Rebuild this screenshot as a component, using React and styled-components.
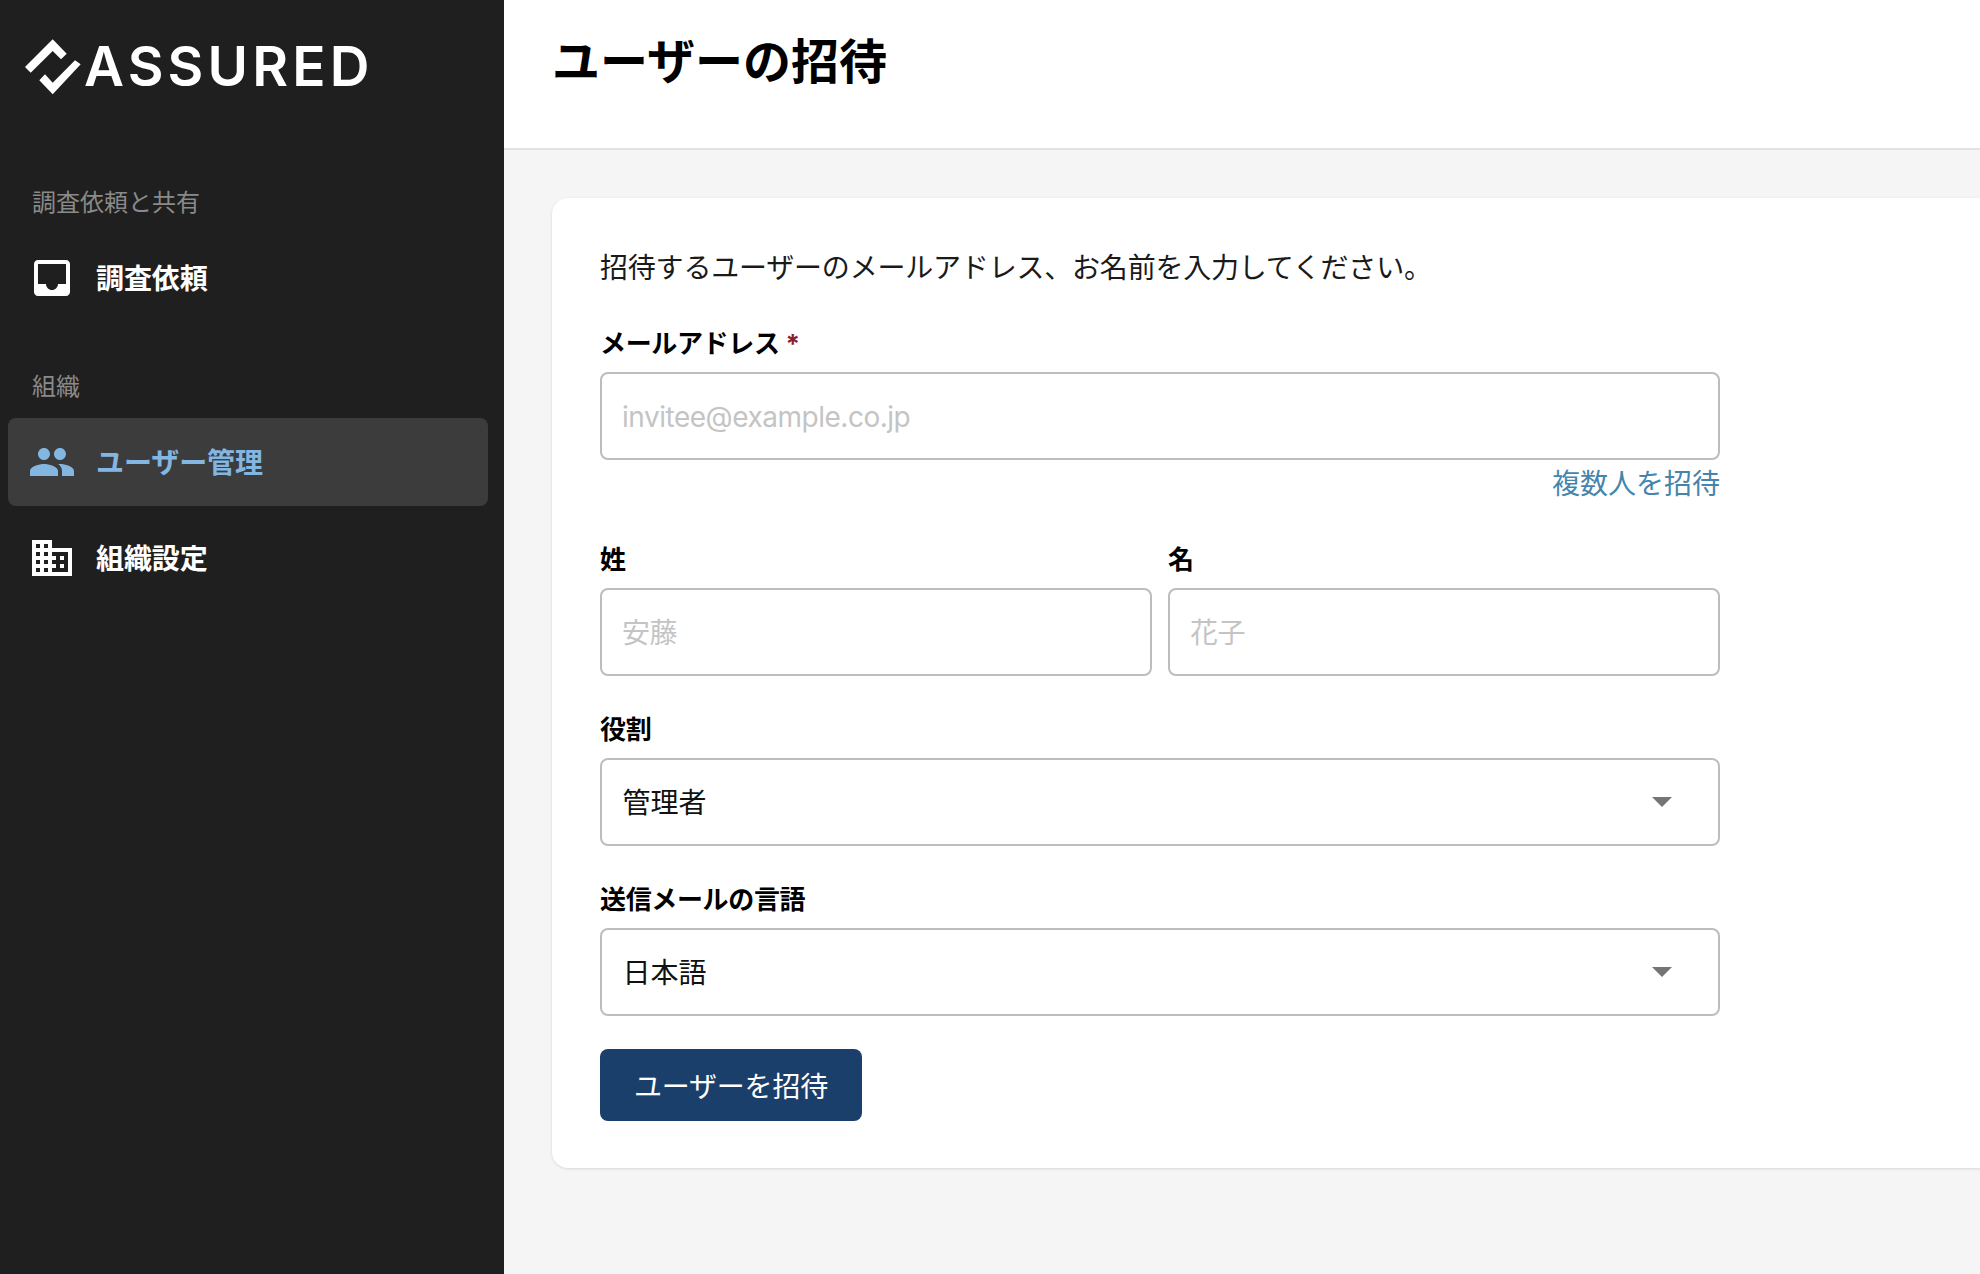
import styled, { createGlobalStyle } from 'styled-components';

const GlobalStyle = createGlobalStyle`
  html, body {
    margin: 0;
    padding: 0;
    height: 100%;
    overflow: hidden;
    background: #f5f5f5;
  }
  * {
    box-sizing: border-box;
  }
  body, input, select, button {
    font-family: 'Inter', 'Noto Sans CJK JP', sans-serif;
  }
`;

const Layout = styled.div`
  display: flex;
  width: 1980px;
  height: 1274px;
  overflow: hidden;
`;

const Sidebar = styled.aside`
  flex: 0 0 504px;
  background: #1f1f1f;
  padding: 0 16px 0 8px;
`;

const Brand = styled.div`
  display: flex;
  align-items: center;
  gap: 3px;
  height: 187px;
  padding: 2px 0 55px 17px;
`;

const BrandName = styled.span`
  margin-bottom: 2px;
  font-family: 'Inter', sans-serif;
  font-size: 55px;
  font-weight: 600;
  letter-spacing: 4.2px;
  line-height: 1;
  color: #fff;
`;

const NavSection = styled.section`
  margin-bottom: 49px;
`;

const NavHeading = styled.div`
  height: 32px;
  margin-bottom: 15px;
  padding-left: 24px;
  font-size: 24px;
  line-height: 32px;
  color: #8a8a8a;
`;

const NavItem = styled.a`
  display: flex;
  align-items: center;
  gap: 20px;
  height: 88px;
  margin-bottom: 8px;
  padding-left: 20px;
  border-radius: 8px;
  font-size: 28px;
  font-weight: 700;
  letter-spacing: -0.1px;
  color: ${props => (props.$active ? '#84b6e2' : '#fff')};
  background: ${props => (props.$active ? '#3c3c3c' : 'transparent')};
`;

const NavText = styled.span`
  padding-bottom: 3px;
`;

const NavIcon = styled.svg`
  width: 48px;
  height: 48px;
  fill: currentColor;
`;

const Main = styled.main`
  flex: 1;
  min-width: 0;
`;

const PageHeader = styled.header`
  display: flex;
  align-items: center;
  height: 150px;
  padding: 0 0 32px 48px;
  background: #fff;
  border-bottom: 2px solid #e3e3e3;
`;

const Title = styled.h1`
  margin: 0;
  font-size: 48px;
  font-weight: 700;
  color: #000;
`;

const Card = styled.div`
  width: 1500px;
  margin: 48px 0 0 48px;
  padding: 48px 48px 47px;
  background: #fff;
  border-radius: 16px;
  box-shadow: 0 1px 3px rgba(0, 0, 0, 0.12);
`;

const Intro = styled.p`
  margin: 0 0 35px;
  padding-top: 1px;
  font-size: 28px;
  letter-spacing: -0.2px;
  line-height: 42px;
  color: #1a1a1a;
`;

const Form = styled.form`
  display: flex;
  flex-direction: column;
  gap: 34px;
  width: 1120px;
`;

const Field = styled.div`
  display: flex;
  flex-direction: column;
`;

const Label = styled.label`
  height: 36px;
  margin-bottom: 12px;
  padding-top: 2px;
  font-size: 26px;
  font-weight: 700;
  letter-spacing: -0.35px;
  line-height: 36px;
  color: #000;
`;

const Required = styled.span`
  margin-left: 6px;
  font-size: 26px;
  font-weight: 700;
  color: #8c1d2c;
`;

const TextInput = styled.input`
  width: 100%;
  height: 88px;
  padding: 2px 20px 0;
  background: #fff;
  border: 2px solid #bdbdbd;
  border-radius: 8px;
  font-size: 28px;
  letter-spacing: -0.48px;
  color: #111;

  &::placeholder {
    color: #c4c4c4;
    opacity: 1;
  }
`;

const HelperLink = styled.a`
  align-self: flex-end;
  height: 44px;
  margin-bottom: 2px;
  padding-top: 2px;
  font-size: 28px;
  line-height: 44px;
  color: #4585ac;
`;

const NameRow = styled.div`
  display: grid;
  grid-template-columns: 1fr 1fr;
  gap: 16px;
`;

const SelectWrap = styled.div`
  position: relative;
`;

const Select = styled.select`
  display: block;
  width: 100%;
  height: 88px;
  padding: 2px 20.5px 0;
  background: #fff;
  border: 2px solid #bdbdbd;
  border-radius: 8px;
  font-size: 28px;
  color: #111;
  appearance: none;
`;

const Caret = styled.span`
  position: absolute;
  top: 39px;
  right: 48px;
  width: 0;
  height: 0;
  border-left: 10px solid transparent;
  border-right: 10px solid transparent;
  border-top: 10px solid #757575;
  pointer-events: none;
`;

const SubmitButton = styled.button`
  align-self: flex-start;
  width: 262px;
  height: 72px;
  margin-top: -1px;
  padding: 0 0 1px;
  background: #1b3f6b;
  border: 0;
  border-radius: 8px;
  font-size: 28px;
  letter-spacing: -0.2px;
  color: #fff;
`;

const Logo = () => (
  <svg width="56" height="56" viewBox="0 0 56 56" fill="#fff">
    <path d="M0 28 27.7 0.3 41.7 14.7 36 20.3 27.7 12 5.7 33.7z" />
    <path d="M55.7 25.3 27.7 55.3 14.3 41.3 20 35.3 27.7 43.7 50 21.3z" />
  </svg>
);

const InboxIcon = () => (
  <NavIcon viewBox="0 0 24 24">
    <path d="M19 3H4.99c-1.11 0-1.98.89-1.98 2L3 19c0 1.1.88 2 1.99 2H19c1.1 0 2-.9 2-2V5c0-1.11-.9-2-2-2zm0 12h-4c0 1.66-1.35 3-3 3s-3-1.34-3-3H4.99V5H19v10z" />
  </NavIcon>
);

const PeopleIcon = () => (
  <NavIcon viewBox="0 0 24 24">
    <path d="M16 11c1.66 0 2.99-1.34 2.99-3S17.66 5 16 5c-1.66 0-3 1.34-3 3s1.34 3 3 3zm-8 0c1.66 0 2.99-1.34 2.99-3S9.66 5 8 5C6.34 5 5 6.34 5 8s1.34 3 3 3zm0 2c-2.33 0-7 1.17-7 3.5V19h14v-2.5c0-2.33-4.67-3.5-7-3.5zm8 0c-.29 0-.62.02-.97.05 1.16.84 1.97 1.97 1.97 3.45V19h6v-2.5c0-2.33-4.67-3.5-7-3.5z" />
  </NavIcon>
);

const DomainIcon = () => (
  <NavIcon viewBox="0 0 24 24">
    <path d="M12 7V3H2v18h20V7H12zM6 19H4v-2h2v2zm0-4H4v-2h2v2zm0-4H4V9h2v2zm0-4H4V5h2v2zm4 12H8v-2h2v2zm0-4H8v-2h2v2zm0-4H8V9h2v2zm0-4H8V5h2v2zm10 12h-8v-2h2v-2h-2v-2h2v-2h-2V9h8v10zm-2-8h-2v2h2v-2zm0 4h-2v2h2v-2z" />
  </NavIcon>
);

const App = () => (
  <>
    <GlobalStyle />
    <Layout>
      <Sidebar>
        <Brand>
          <Logo />
          <BrandName>ASSURED</BrandName>
        </Brand>
        <NavSection>
          <NavHeading>調査依頼と共有</NavHeading>
          <NavItem>
            <InboxIcon />
            <NavText>調査依頼</NavText>
          </NavItem>
        </NavSection>
        <NavSection>
          <NavHeading>組織</NavHeading>
          <NavItem $active>
            <PeopleIcon />
            <NavText>ユーザー管理</NavText>
          </NavItem>
          <NavItem>
            <DomainIcon />
            <NavText>組織設定</NavText>
          </NavItem>
        </NavSection>
      </Sidebar>
      <Main>
        <PageHeader>
          <Title>ユーザーの招待</Title>
        </PageHeader>
        <Card>
          <Intro>招待するユーザーのメールアドレス、お名前を入力してください。</Intro>
          <Form>
            <Field>
              <Label>
                メールアドレス<Required>*</Required>
              </Label>
              <TextInput placeholder="invitee@example.co.jp" />
              <HelperLink>複数人を招待</HelperLink>
            </Field>
            <NameRow>
              <Field>
                <Label>姓</Label>
                <TextInput placeholder="安藤" />
              </Field>
              <Field>
                <Label>名</Label>
                <TextInput placeholder="花子" />
              </Field>
            </NameRow>
            <Field>
              <Label>役割</Label>
              <SelectWrap>
                <Select defaultValue="admin">
                  <option value="admin">管理者</option>
                </Select>
                <Caret />
              </SelectWrap>
            </Field>
            <Field>
              <Label>送信メールの言語</Label>
              <SelectWrap>
                <Select defaultValue="ja">
                  <option value="ja">日本語</option>
                </Select>
                <Caret />
              </SelectWrap>
            </Field>
            <SubmitButton type="button">ユーザーを招待</SubmitButton>
          </Form>
        </Card>
      </Main>
    </Layout>
  </>
);

export default App;
